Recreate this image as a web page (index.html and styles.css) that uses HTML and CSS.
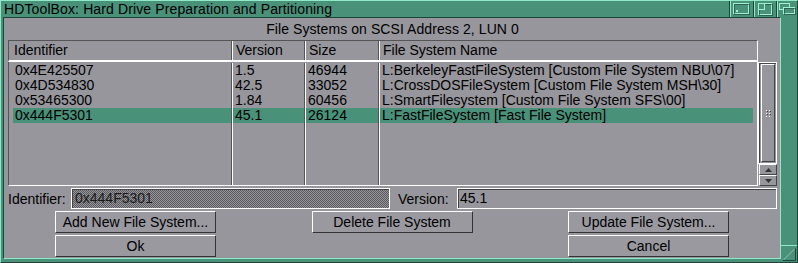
FILE: index.html
```html
<!DOCTYPE html>
<html lang="en">
<head>
  <meta charset="UTF-8">
  <title>HDToolBox</title>
  <link rel="stylesheet" href="styles.css">
</head>
<body>

<div class="window">
  <div class="titlebar">
    <span class="title">HDToolBox: Hard Drive Preparation and Partitioning</span>
    <div class="gadgets">
      <div class="gadget g1">
        <svg width="17" height="12" viewBox="0 0 17 12">
          <rect x="0.5" y="0.5" width="15" height="10" fill="none" stroke="#9ff0d2"/>
          <rect x="1.5" y="1.5" width="15" height="10" fill="none" stroke="#1d4438" opacity="0.6"/>
          <rect x="3" y="7" width="2" height="2" fill="#9ff0d2"/>
        </svg>
      </div>
      <div class="gadget g2">
        <svg width="15" height="13" viewBox="0 0 15 13">
          <rect x="0.5" y="0.5" width="13" height="11" fill="none" stroke="#9ff0d2"/>
          <rect x="1.5" y="1.5" width="13" height="11" fill="none" stroke="#1d4438" opacity="0.6"/>
          <rect x="0.5" y="0.5" width="6" height="6" fill="#4a917a" stroke="#9ff0d2"/>
        </svg>
      </div>
      <div class="gadget g3">
        <svg width="17" height="12" viewBox="0 0 17 12">
          <rect x="0.5" y="0.5" width="10" height="6" fill="none" stroke="#9ff0d2"/>
          <rect x="4.5" y="4.5" width="11" height="6" fill="#4a917a" stroke="#9ff0d2"/>
          <rect x="5.5" y="5.5" width="11" height="6" fill="none" stroke="#1d4438" opacity="0.6"/>
        </svg>
      </div>
    </div>
  </div>

  <div class="frame">
    <div class="content">
      <div class="heading">File Systems on SCSI Address 2, LUN 0</div>

      <div class="list">
        <div class="list-main">
          <div class="list-head">
            <span>Identifier</span>
            <span>Version</span>
            <span>Size</span>
            <span>File System Name</span>
          </div>
          <div class="list-body">
            <div class="row"><span>0x4E425507</span><span>1.5</span><span>46944</span><span>L:BerkeleyFastFileSystem [Custom File System NBU\07]</span></div>
            <div class="row"><span>0x4D534830</span><span>42.5</span><span>33052</span><span>L:CrossDOSFileSystem [Custom File System MSH\30]</span></div>
            <div class="row"><span>0x53465300</span><span>1.84</span><span>60456</span><span>L:SmartFilesystem [Custom File System SFS\00]</span></div>
            <div class="row sel"><span>0x444F5301</span><span>45.1</span><span>26124</span><span>L:FastFileSystem [Fast File System]</span></div>
            <div class="row"><span></span><span></span><span></span><span></span></div>
          </div>
        </div>
        <div class="scroll">
          <div class="track">
            <div class="knob">
              <svg width="5" height="7" viewBox="0 0 5 7">
                <rect x="0" y="0" width="1" height="1" fill="#fff"/><rect x="3" y="0" width="1" height="1" fill="#fff"/>
                <rect x="1" y="1" width="1" height="1" fill="#444"/><rect x="4" y="1" width="1" height="1" fill="#444"/>
                <rect x="0" y="3" width="1" height="1" fill="#fff"/><rect x="3" y="3" width="1" height="1" fill="#fff"/>
                <rect x="1" y="4" width="1" height="1" fill="#444"/><rect x="4" y="4" width="1" height="1" fill="#444"/>
                <rect x="0" y="6" width="1" height="1" fill="#fff"/><rect x="3" y="6" width="1" height="1" fill="#fff"/>
              </svg>
            </div>
          </div>
          <div class="arrow">
            <svg width="7" height="4" viewBox="0 0 7 4"><path d="M0 4 L3.5 0 L7 4 Z" fill="#333"/></svg>
          </div>
          <div class="arrow">
            <svg width="7" height="4" viewBox="0 0 7 4"><path d="M0 0 L3.5 4 L7 0 Z" fill="#333"/></svg>
          </div>
        </div>
      </div>

      <div class="fields">
        <span class="label">Identifier:</span>
        <div class="field field-id">0x444F5301</div>
        <span class="label label-ver">Version:</span>
        <div class="field field-ver">45.1</div>
      </div>

      <div class="buttons">
        <button class="btn">Add New File System...</button>
        <button class="btn">Delete File System</button>
        <button class="btn">Update File System...</button>
      </div>
      <div class="buttons">
        <button class="btn">Ok</button>
        <span></span>
        <button class="btn">Cancel</button>
      </div>
    </div>

    <div class="side">
      <div class="sizer">
        <svg width="16" height="16" viewBox="0 0 16 16">
          <path d="M2 14.5 H14.5 V2 Z" fill="none" stroke="#1d4438"/>
          <path d="M2.5 14 L14 2.5" stroke="#9ff0d2"/>
        </svg>
      </div>
    </div>
  </div>
</div>

</body>
</html>
```

FILE: styles.css
```css
body {
  margin: 0;
  background: #4a917a;
  font-family: "Liberation Sans", Arial, sans-serif;
  font-size: 14px;
  color: #000;
}
.window {
  width: 798px;
  height: 263px;
  box-sizing: border-box;
  background: #4a917a;
  border-left: 1px solid #8fe8c6;
  border-top: 1px solid #8fe8c6;
  border-right: 1px solid #1d4438;
  border-bottom: 1px solid #1d4438;
  display: flex;
  flex-direction: column;
}
.titlebar {
  height: 16px;
  display: flex;
}
.title {
  flex: 1;
  padding-left: 3px;
  line-height: 16px;
  letter-spacing: 0.12px;
  white-space: nowrap;
}
.gadgets {
  display: flex;
}
.gadget {
  box-sizing: border-box;
  border-left: 1px solid #1d4438;
  box-shadow: inset 1px 0 0 #8fe8c6;
  display: flex;
  align-items: center;
  justify-content: center;
}
.gadget svg {
  display: block;
}
.g1 { width: 24px; }
.g2 { width: 23px; }
.g3 { width: 21px; }

.frame {
  flex: 1;
  display: flex;
}
.content {
  width: 778px;
  box-sizing: border-box;
  margin-left: 2px;
  margin-bottom: 3px;
  background: #97969c;
  border-left: 1px solid #1d4438;
  border-top: 1px solid #1d4438;
  border-right: 1px solid #8fe8c6;
  border-bottom: 1px solid #8fe8c6;
  padding: 0 3px 0 4px;
  display: flex;
  flex-direction: column;
}
.side {
  flex: 1;
  display: flex;
  flex-direction: column;
  justify-content: flex-end;
}
.sizer {
  height: 17px;
  border-top: 1px solid #8fe8c6;
  box-sizing: border-box;
}
.sizer svg {
  display: block;
}

.heading {
  height: 22px;
  line-height: 22px;
  text-align: center;
  letter-spacing: 0.08px;
}

/* list browser */
.list {
  display: flex;
  height: 146px;
}
.list-main {
  width: 750px;
  display: flex;
  flex-direction: column;
}
.list-head {
  height: 22px;
  box-sizing: border-box;
  display: grid;
  grid-template-columns: 223px 73px 74px 1fr;
  border-top: 1px solid #555;
  border-left: 1px solid #555;
  border-right: 1px solid #fff;
  border-bottom: 2px solid #fff;
}
.list-head span {
  padding-left: 3px;
  line-height: 19px;
  white-space: nowrap;
}
.list-head span:first-child {
  padding-left: 5px;
}
.list-head span + span {
  border-left: 1px solid #fff;
  box-shadow: -1px 0 0 #555;
}
.list-body {
  flex: 1;
  display: grid;
  grid-template-columns: 219px 73px 74px 1fr;
  grid-template-rows: repeat(4, 15px) 1fr;
  padding: 1px 4px 0;
  border-left: 1px solid #555;
  border-right: 1px solid #fff;
  border-bottom: 1px solid #fff;
}
.row {
  display: contents;
}
.row span {
  padding-left: 2px;
  line-height: 15px;
  white-space: nowrap;
  overflow: hidden;
}
.row span + span {
  border-left: 1px solid #fff;
  box-shadow: -1px 0 0 #555;
}
.row.sel span {
  background: #4a917a;
}

.scroll {
  width: 19px;
  margin-top: 22px;
  display: flex;
  flex-direction: column;
}
.track {
  flex: 1;
  border: 1px solid #fff;
  box-shadow: inset 1px 1px 0 #444;
  padding: 1px 1px 1px 2px;
  display: flex;
}
.knob {
  flex: 1;
  height: 96px;
  border-top: 1px solid #fff;
  border-left: 1px solid #fff;
  border-right: 1px solid #444;
  border-bottom: 1px solid #444;
  display: flex;
  align-items: center;
  justify-content: center;
}
.arrow {
  height: 12px;
  box-sizing: border-box;
  margin-left: 1px;
  border-top: 1px solid #fff;
  border-left: 1px solid #fff;
  border-right: 1px solid #444;
  border-bottom: 1px solid #444;
  display: flex;
  align-items: center;
  justify-content: center;
}

/* string gadgets */
.fields {
  display: flex;
  align-items: center;
  height: 21px;
  margin-top: 2px;
}
.label {
  width: 63px;
  white-space: nowrap;
}
.label-ver {
  width: 59px;
  margin-left: 8px;
}
.field {
  height: 21px;
  box-sizing: border-box;
  border: 1px solid #fff;
  box-shadow: inset 1px 1px 0 #444;
  padding-left: 2px;
  line-height: 19px;
  white-space: nowrap;
}
.field-id {
  width: 319px;
  padding-left: 3px;
  color: #1a1a1a;
  background: repeating-conic-gradient(#5a5a5e 0 25%, #97969c 0 50%) 0 0 / 2px 2px;
}
.field-ver {
  flex: 1;
}

.buttons {
  display: grid;
  grid-template-columns: repeat(3, 161px);
  justify-content: space-between;
  padding: 0 48px 0 47px;
  margin-top: 2px;
}
.btn {
  height: 22px;
  margin: 0;
  padding: 0;
  font: inherit;
  color: #000;
  background: #9a99a0;
  border: 1px solid;
  border-color: #fff #333 #333 #fff;
  text-align: center;
}
```
